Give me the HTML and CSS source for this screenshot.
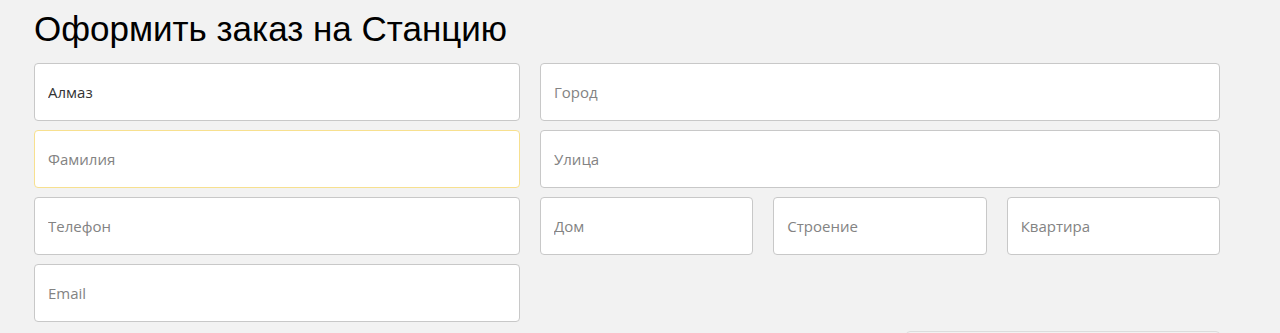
FILE: index.html
```html
<!DOCTYPE html>
<html lang="ru">
<head>
    <meta charset="UTF-8">
    <meta name="viewport" content="width=device-width, initial-scale=1.0">
    <title>Оформить заказ на Станцию</title>
    <link rel="stylesheet" href="styles.css">
</head>
<body>
    <div class="order">
        <h1>Оформить заказ на Станцию</h1>
        <form class="order-form">
            <div class="col">
                <input type="text" class="field" value="Алмаз">
                <input type="text" class="field field-focus" placeholder="Фамилия">
                <input type="tel" class="field" placeholder="Телефон">
                <input type="email" class="field" placeholder="Email">
            </div>
            <div class="col">
                <input type="text" class="field" placeholder="Город">
                <input type="text" class="field" placeholder="Улица">
                <div class="house-row">
                    <input type="text" class="field" placeholder="Дом">
                    <input type="text" class="field" placeholder="Строение">
                    <input type="text" class="field" placeholder="Квартира">
                </div>
            </div>
        </form>
        <div class="actions">
            <button type="button" class="submit-button" aria-label="Оформить"></button>
        </div>
    </div>
</body>
</html>
```

FILE: styles.css
```css
body {
    margin: 0;
    padding: 0;
    background-color: #f2f2f2;
    font-family: "Open Sans", Arial, sans-serif;
}
.order {
    width: 1186px;
    padding: 0 0 0 34px;
}
.order h1 {
    margin: 0;
    padding-top: 9px;
    height: 63px;
    box-sizing: border-box;
    font-family: "Liberation Sans", Arial, sans-serif;
    font-weight: normal;
    font-size: 35px;
    line-height: 40px;
    color: #000;
}
.order-form {
    display: grid;
    grid-template-columns: 486px 680px;
    column-gap: 20px;
}
.col {
    display: flex;
    flex-direction: column;
    gap: 9px;
}
.house-row {
    display: grid;
    grid-template-columns: repeat(3, 1fr);
    column-gap: 20px;
}
.field {
    box-sizing: border-box;
    width: 100%;
    height: 58px;
    padding: 0 13px;
    border: 1px solid #c8c8c8;
    border-radius: 4px;
    background-color: #fff;
    font-family: "Open Sans", Arial, sans-serif;
    font-size: 15px;
    color: #333;
    outline: none;
}
.field::placeholder {
    color: #838383;
}
.field-focus {
    border-color: #f7e08f;
}
.actions {
    display: flex;
    justify-content: flex-end;
    margin-top: 9px;
}
.submit-button {
    width: 314px;
    height: 48px;
    border: 1px solid #dcdcdc;
    border-radius: 4px;
    background-color: #f2f2f2;
}
```
